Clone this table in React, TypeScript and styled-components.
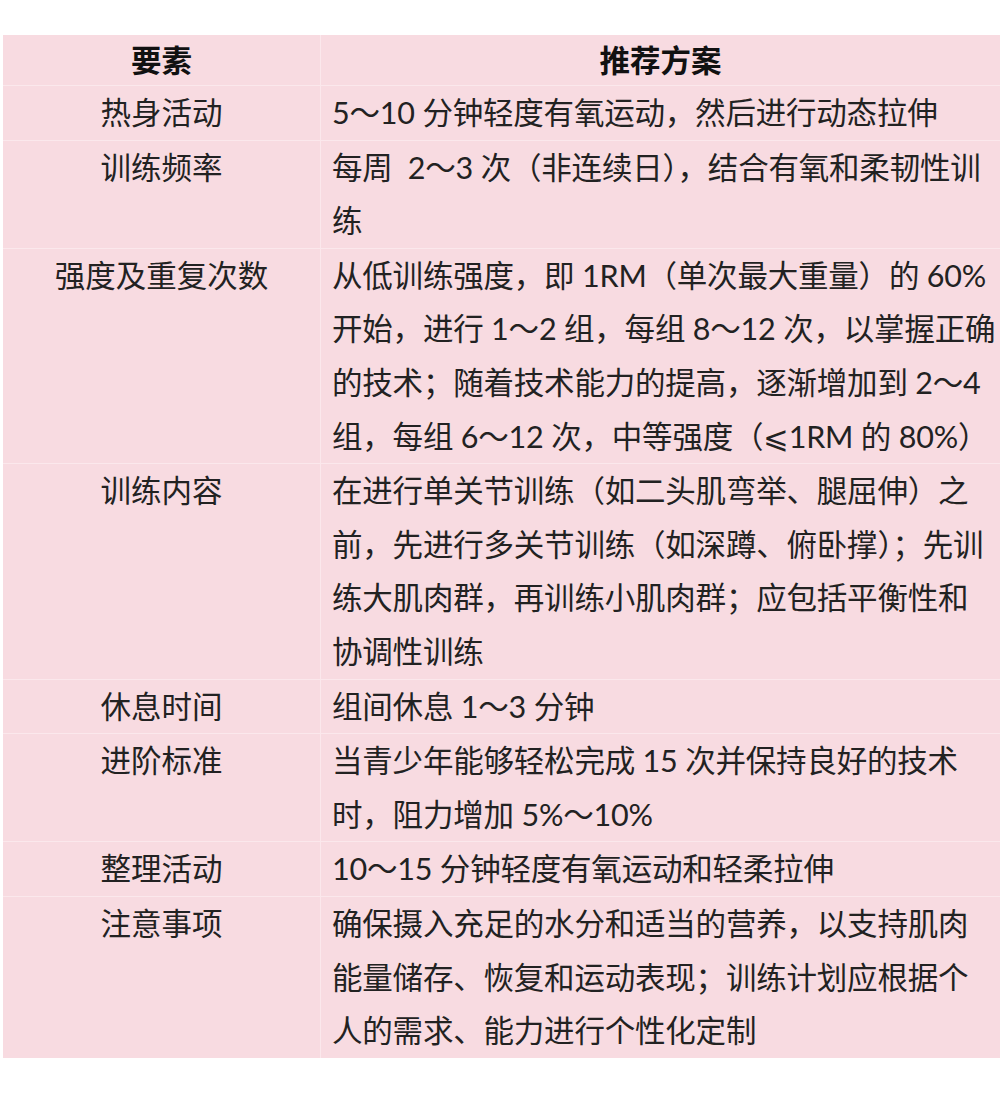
import React from "react"
import styled, { createGlobalStyle } from "styled-components"

const GlobalStyle = createGlobalStyle`
	html, body {
		margin: 0;
		padding: 0;
		background: #ffffff;
	}
	body {
		font-family: Lato, "Noto Sans CJK SC", "DejaVu Sans", sans-serif;
		color: #222;
	}
`

const Page = styled.div`
	width: 1004px;
	height: 1104px;
	padding: 35px 4px 0 3px;
	box-sizing: border-box;
`

const Table = styled.div`
	display: grid;
	grid-template-columns: 318px 1fr;
	background: #f8dbe1;
`

const Cell = styled.div<{ $head?: boolean; $left?: boolean; $last?: boolean }>`
	box-sizing: border-box;
	font-size: 30.5px;
	line-height: ${(p) => (p.$head ? "50px" : "53.6px")};
	font-weight: ${(p) => (p.$head ? 700 : 400)};
	color: ${(p) => (p.$head ? "#111" : "#222")};
	text-align: ${(p) => (p.$head || p.$left ? "center" : "left")};
	padding-left: ${(p) => (p.$head || p.$left ? "0" : "11px")};
	border-bottom: ${(p) => (p.$last ? "none" : "1px solid #fbe8ec")};
	border-right: ${(p) => (p.$left ? "1px solid #fbe8ec" : "none")};
	white-space: pre;
	overflow: hidden;
`

const Line = styled.div`
	letter-spacing: -0.2px;
`

const rows: { name: string; lines: string[] }[] = [
	{ name: "热身活动", lines: ["5～10 分钟轻度有氧运动，然后进行动态拉伸"] },
	{
		name: "训练频率",
		lines: ["每周  2～3 次（非连续日），结合有氧和柔韧性训", "练"],
	},
	{
		name: "强度及重复次数",
		lines: [
			"从低训练强度，即 1RM（单次最大重量）的 60%",
			"开始，进行 1～2 组，每组 8～12 次，以掌握正确",
			"的技术；随着技术能力的提高，逐渐增加到 2～4",
			"组，每组 6～12 次，中等强度（⩽1RM 的 80%）",
		],
	},
	{
		name: "训练内容",
		lines: [
			"在进行单关节训练（如二头肌弯举、腿屈伸）之",
			"前，先进行多关节训练（如深蹲、俯卧撑）；先训",
			"练大肌肉群，再训练小肌肉群；应包括平衡性和",
			"协调性训练",
		],
	},
	{ name: "休息时间", lines: ["组间休息 1～3 分钟"] },
	{
		name: "进阶标准",
		lines: ["当青少年能够轻松完成 15 次并保持良好的技术", "时，阻力增加 5%～10%"],
	},
	{ name: "整理活动", lines: ["10～15 分钟轻度有氧运动和轻柔拉伸"] },
	{
		name: "注意事项",
		lines: [
			"确保摄入充足的水分和适当的营养，以支持肌肉",
			"能量储存、恢复和运动表现；训练计划应根据个",
			"人的需求、能力进行个性化定制",
		],
	},
]

export default function App() {
	return (
		<>
			<GlobalStyle />
			<Page>
				<Table>
					<Cell $head $left>
						要素
					</Cell>
					<Cell $head>推荐方案</Cell>
					{rows.map((row, i) => {
						const last = i === rows.length - 1
						return (
							<React.Fragment key={row.name}>
								<Cell $left $last={last}>
									{row.name}
								</Cell>
								<Cell $last={last}>
									{row.lines.map((l) => (
										<Line key={l}>{l}</Line>
									))}
								</Cell>
							</React.Fragment>
						)
					})}
				</Table>
			</Page>
		</>
	)
}
